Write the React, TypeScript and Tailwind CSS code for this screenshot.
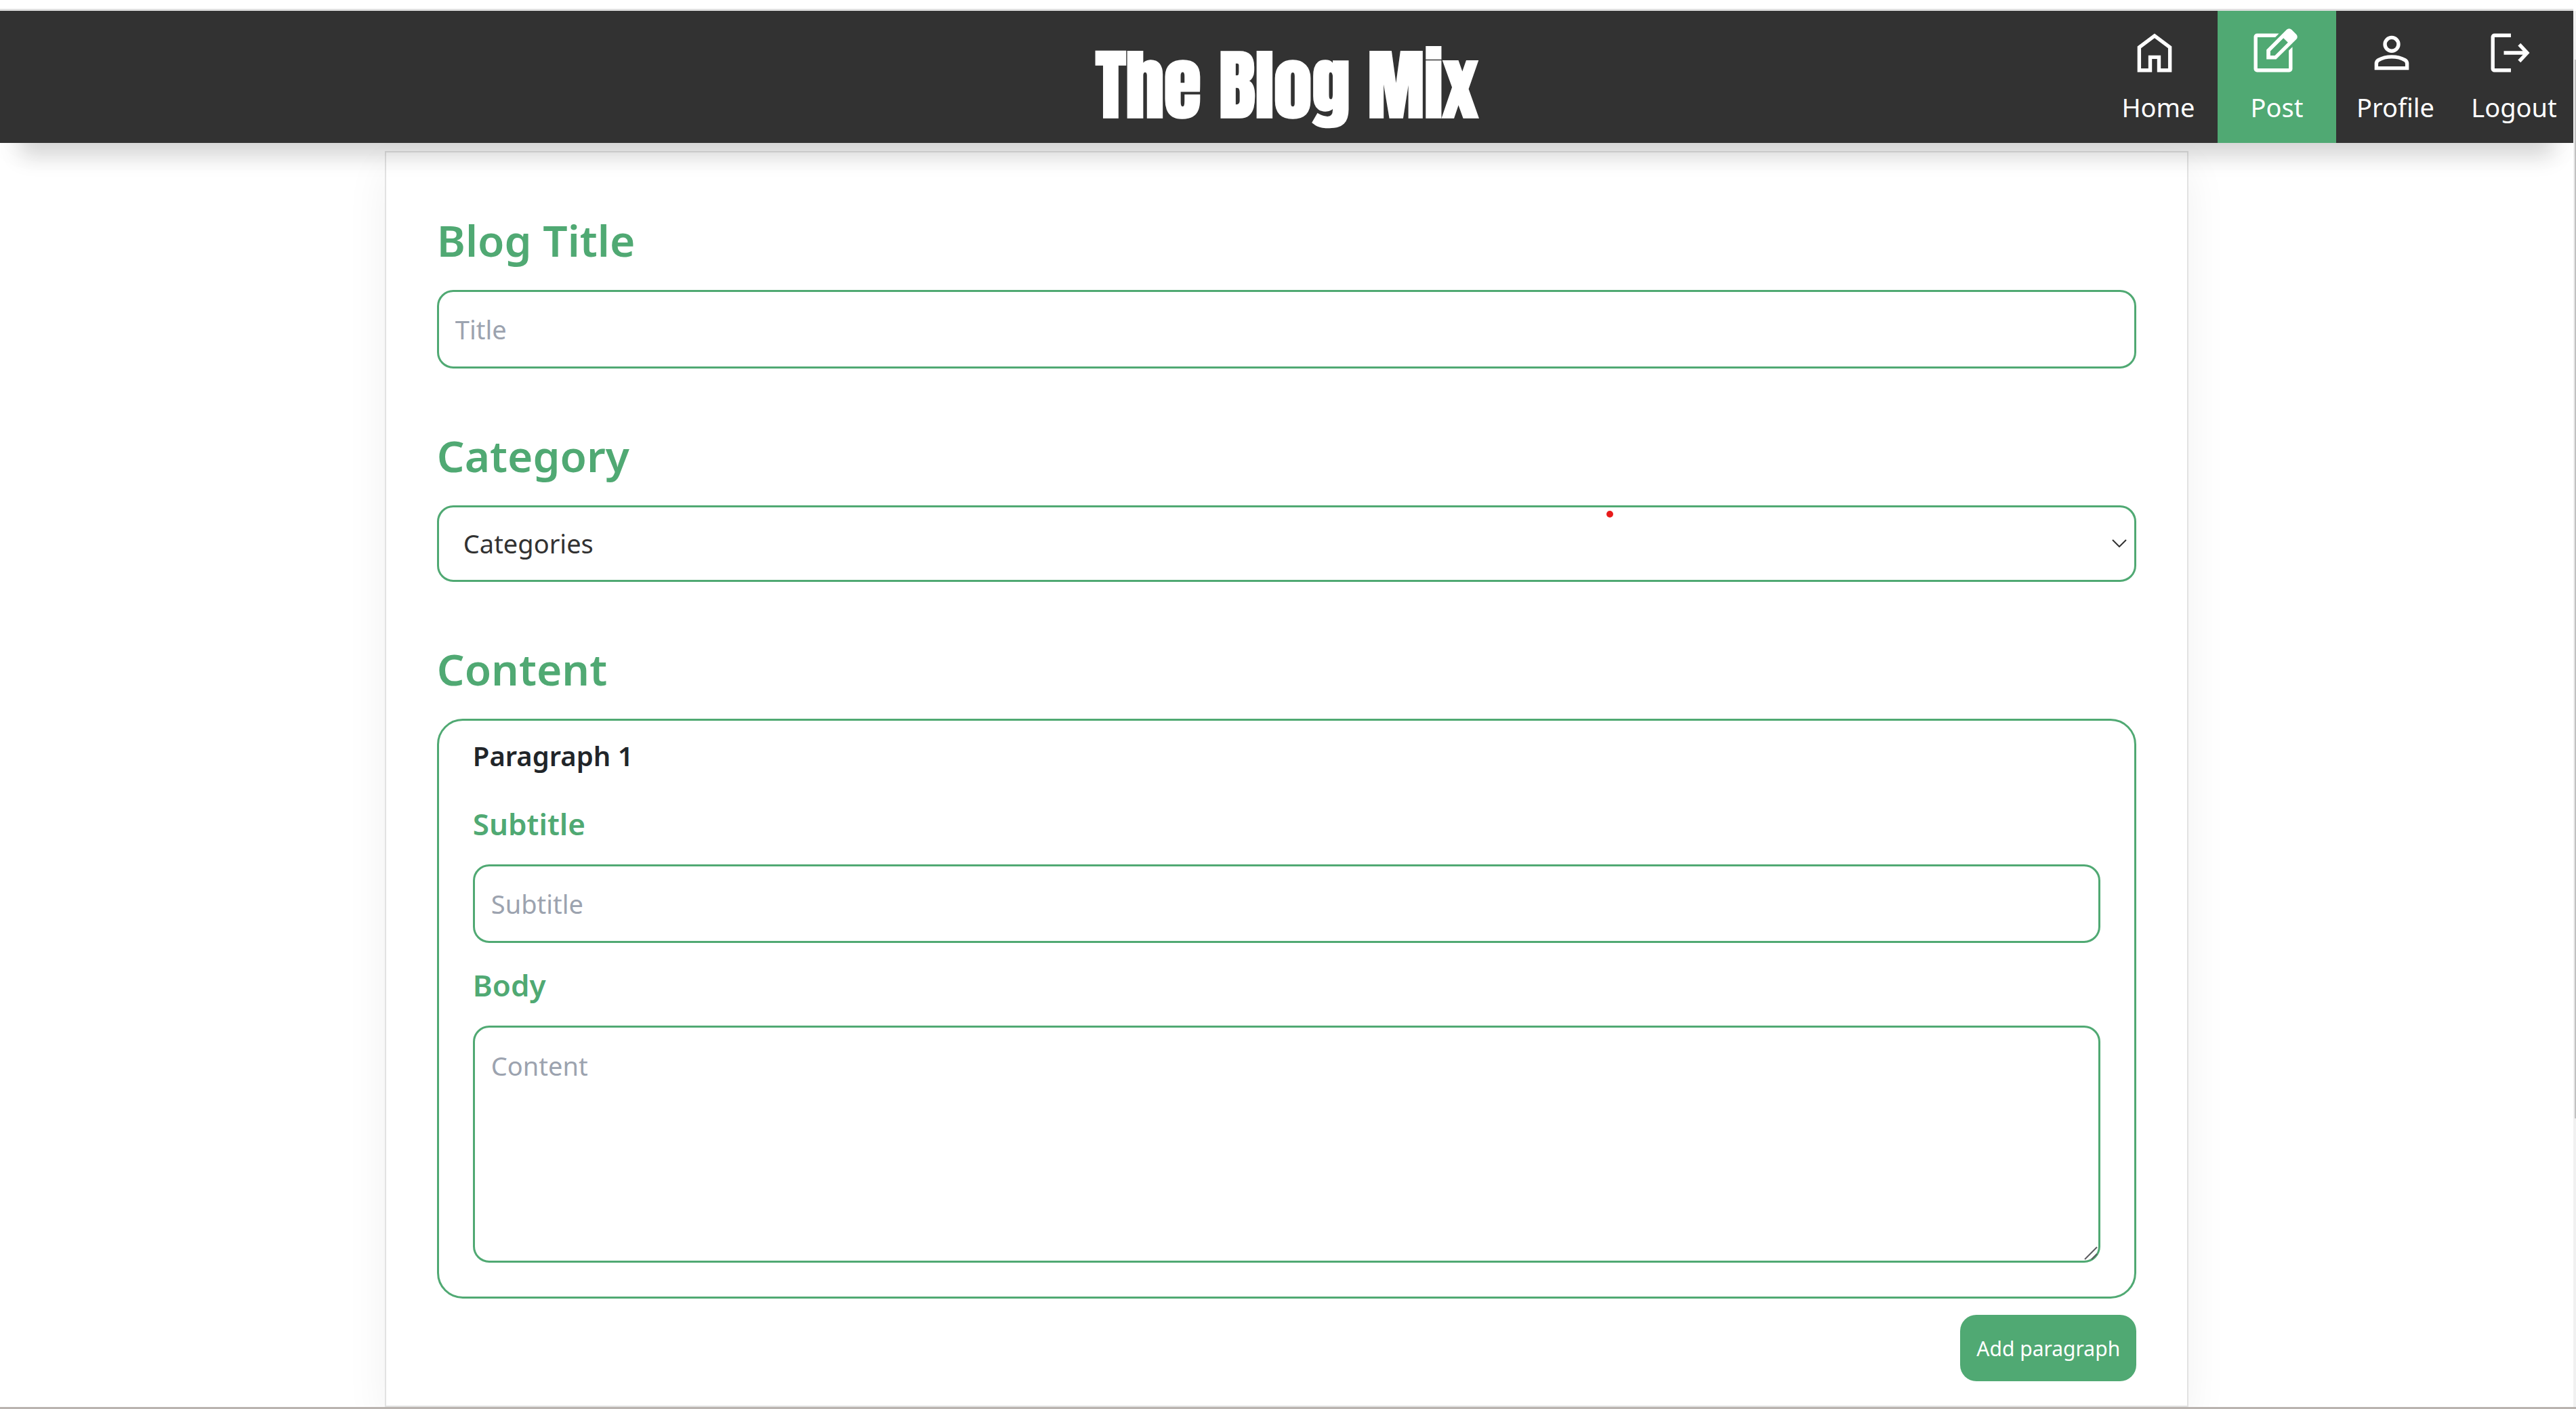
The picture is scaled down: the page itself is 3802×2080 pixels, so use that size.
import React, { ReactNode } from "react";

function HomeIcon() {
  return (
    <path
      d="M4.85 20.15V9.4L12 4.05l7.15 5.35v10.75h-5.1V14h-4.1v6.15z"
      fill="none"
      stroke="currentColor"
      strokeWidth="1.7"
    />
  );
}

function PostIcon() {
  return (
    <g fill="currentColor" fillRule="evenodd">
      <path d="M14.7 3H4.5A1.5 1.5 0 0 0 3 4.5v15A1.5 1.5 0 0 0 4.5 21h15a1.5 1.5 0 0 0 1.5-1.5V9.2l-1.7 1.7v8.4H4.7V4.7H13z" />
      <path d="M8.9 15v-4.4l9.4-9.4a1.6 1.6 0 0 1 2.3 0l2.2 2.2a1.6 1.6 0 0 1 0 2.3L13.4 15zM10.7 13.3h2.1l6.1-6.1-2.1-2.1-6.1 6.1z" />
    </g>
  );
}

function ProfileIcon() {
  return (
    <g fill="none" stroke="currentColor" strokeWidth="1.7">
      <circle cx="12" cy="8" r="3.15" />
      <path d="M4.85 19.15v-2.1c0-.7.4-1.3 1-1.7 1.75-1.05 3.95-1.5 6.15-1.5s4.4.45 6.15 1.5c.6.4 1 1 1 1.7v2.1z" />
    </g>
  );
}

function LogoutIcon() {
  return (
    <g fill="none" stroke="currentColor" strokeWidth="1.7">
      <path d="M12.3 3.85H4.6a.75.75 0 0 0-.75.75v14.8c0 .4.35.75.75.75h7.7" />
      <path d="M9 12h10.8M16.2 8.1l3.65 3.9-3.65 3.9" />
    </g>
  );
}

function NavItem({ label, active, children }: { label: string; active?: boolean; children: ReactNode }) {
  return (
    <a
      href="#"
      aria-current={active ? "page" : undefined}
      className={
        active
          ? "flex w-[175px] flex-col items-center bg-[#50a973] pt-6"
          : "flex w-[175px] flex-col items-center pt-6"
      }
    >
      <svg viewBox="0 0 24 24" aria-hidden="true" className="mr-3 size-[76px]">
        {children}
      </svg>
      <span className="mt-3 text-[38px] leading-[60px]">{label}</span>
    </a>
  );
}

function Section({ title, id, children }: { title: string; id?: string; children: ReactNode }) {
  return (
    <section className="flex flex-col gap-6">
      <h2 className="text-[64px] leading-[98px] font-semibold text-[#50a973]">
        {id ? <label htmlFor={id}>{title}</label> : title}
      </h2>
      {children}
    </section>
  );
}

export default function App() {
  return (
    <div className="flex h-screen overflow-hidden border-b-[3px] border-[#b9b3af] bg-white font-['Noto_Sans',sans-serif] text-[#212529]">
      <div className="flex min-w-0 flex-1 flex-col">
        <div className="h-4 shrink-0 border-b-[3px] border-[#e0e0e0]" />
        <header className="relative z-10 grid h-[195px] shrink-0 grid-cols-[1fr_auto_1fr] bg-[#323232] text-white shadow-[0_50px_30px_-30px_rgba(0,0,0,0.15),0_20px_50px_-10px_rgba(0,0,0,0.03)]">
          <h1 className="col-start-2 self-center pt-6 font-['Impact','Anton','Open_Sans',sans-serif] text-[112px] leading-[120px] font-extrabold">
            The Blog Mix
          </h1>
          <nav className="flex justify-end">
            <NavItem label="Home">
              <HomeIcon />
            </NavItem>
            <NavItem label="Post" active>
              <PostIcon />
            </NavItem>
            <NavItem label="Profile">
              <ProfileIcon />
            </NavItem>
            <NavItem label="Logout">
              <LogoutIcon />
            </NavItem>
          </nav>
        </header>
        <main className="mx-auto mt-3 flex w-[70.1%] flex-1 flex-col gap-20 border-2 border-[#e2e2e2] px-[75px] pt-[81px] shadow-[0_24px_60px_rgba(0,0,0,0.06)]">
          <Section title="Blog Title" id="title">
            <input
              id="title"
              placeholder="Title"
              className="h-[116px] rounded-3xl border-3 border-[#50a973] px-6 text-[38px] placeholder:text-[#9ca3af]"
            />
          </Section>
          <Section title="Category" id="category">
            <div className="relative flex">
              <select
                id="category"
                className="h-[113px] flex-1 appearance-none rounded-3xl border-3 border-[#50a973] px-9 text-[38px] text-[#323232]"
              >
                <option>Categories</option>
              </select>
              <svg
                viewBox="0 0 22 12"
                fill="none"
                stroke="#323232"
                strokeWidth="2"
                aria-hidden="true"
                className="pointer-events-none absolute top-[50px] right-3.5 h-3 w-[22px]"
              >
                <path d="M1 1l10 10L21 1" />
              </svg>
              <span className="absolute top-2 left-[68.8%] size-2.5 rounded-full bg-[#e81b1b]" />
            </div>
          </Section>
          <Section title="Content">
            <div className="flex flex-col rounded-[38px] border-3 border-[#50a973] px-[50px] pt-5 pb-[50px]">
              <h3 className="text-[40px] leading-[64px] font-semibold">Paragraph 1</h3>
              <label htmlFor="subtitle" className="mt-8 text-[44px] leading-[72px] font-semibold text-[#50a973]">
                Subtitle
              </label>
              <input
                id="subtitle"
                placeholder="Subtitle"
                className="mt-6 h-[116px] rounded-3xl border-3 border-[#50a973] px-6 text-[38px] placeholder:text-[#9ca3af]"
              />
              <label htmlFor="body" className="mt-[26px] text-[44px] leading-[72px] font-semibold text-[#50a973]">
                Body
              </label>
              <div className="relative mt-6 flex">
                <textarea
                  id="body"
                  placeholder="Content"
                  className="h-[350px] flex-1 resize-none rounded-3xl border-3 border-[#50a973] px-6 py-[26px] text-[38px] leading-[60px] placeholder:text-[#9ca3af]"
                />
                <svg
                  viewBox="0 0 20 20"
                  fill="none"
                  stroke="#5c5c60"
                  strokeWidth="2"
                  aria-hidden="true"
                  className="pointer-events-none absolute right-1 bottom-1 size-5"
                >
                  <path d="M1 19L19 1M11 19l8-8" />
                </svg>
              </div>
            </div>
            <button className="h-[98px] self-end rounded-3xl bg-[#50a973] px-6 text-[30px] text-white">
              Add paragraph
            </button>
          </Section>
        </main>
      </div>
      <div className="mt-4 w-1 shrink-0 bg-[#f1f1f1] pt-[72px] pl-0.5">
        <div className="h-[78.6%] bg-[#c1c1c1]" />
      </div>
    </div>
  );
}
